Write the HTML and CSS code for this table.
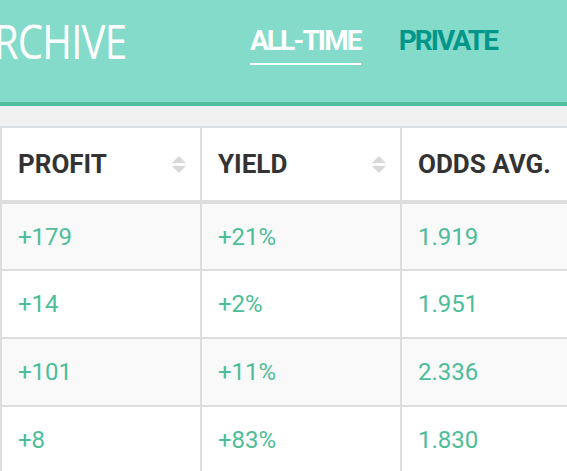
FILE: index.html
```html
<!DOCTYPE html>
<html>
<head>
    <link rel="stylesheet" href="styles.css">
</head>
<body>
    <div id="top-bar">
        <h1 class="title">ARCHIVE</h1>
        <nav class="tabs">
            <a class="tab active">ALL-TIME</a>
            <a class="tab">PRIVATE</a>
        </nav>
    </div>

    <div id="table-wrap">
        <table class="stats">
            <thead>
                <tr>
                    <th><div class="th-inner">PROFIT <span class="sort"></span></div></th>
                    <th><div class="th-inner">YIELD <span class="sort"></span></div></th>
                    <th><div class="th-inner">ODDS AVG. <span class="sort"></span></div></th>
                </tr>
            </thead>
            <tbody>
                <tr><td>+179</td><td>+21%</td><td>1.919</td></tr>
                <tr><td>+14</td><td>+2%</td><td>1.951</td></tr>
                <tr><td>+101</td><td>+11%</td><td>2.336</td></tr>
                <tr><td>+8</td><td>+83%</td><td>1.830</td></tr>
            </tbody>
        </table>
    </div>
</body>
</html>
```

FILE: styles.css
```css
html, body {
    margin: 0;
    padding: 0;
    overflow: hidden;
}

body {
    background: #f1f1f1;
    font-family: Roboto, "Liberation Sans", sans-serif;
    width: 567px;
    height: 471px;
}

#top-bar {
    height: 102px;
    background: #84dbca;
    border-bottom: 4px solid #52be9e;
    display: flex;
    align-items: flex-start;
}

.title {
    margin: 0 0 0 -31px;
    padding-top: 13px;
    font-family: "Open Sans", sans-serif;
    font-weight: 400;
    font-size: 48px;
    line-height: 56px;
    color: #fff;
    letter-spacing: -1px;
    transform: scaleX(0.84);
    transform-origin: left center;
}

.tabs {
    margin-left: auto;
    margin-right: 70px;
    display: flex;
    gap: 38px;
    padding-top: 24px;
}

.tab {
    font-weight: bold;
    font-size: 28px;
    line-height: 34px;
    color: #00978a;
    letter-spacing: -1.9px;
    padding-bottom: 5px;
    border-bottom: 2px solid transparent;
}

.tab.active {
    color: #fff;
    border-bottom-color: #fff;
}

#table-wrap {
    padding-top: 20px;
}

.stats {
    border-collapse: collapse;
    table-layout: fixed;
    background: #fff;
    width: 602px;
    border-top: 2px solid #dde0e3;
}

.stats th,
.stats td {
    width: 200px;
    box-sizing: border-box;
    border: 2px solid #dddddd;
    border-top: none;
    text-align: left;
    padding: 0 14px 0 16px;
}

.stats th {
    height: 75px;
    border-bottom-width: 4px;
    font-size: 26px;
    font-weight: bold;
    color: #333;
}

.th-inner {
    display: flex;
    align-items: center;
    justify-content: space-between;
}

.sort {
    display: inline-flex;
    flex-direction: column;
    gap: 3px;
}

.sort::before,
.sort::after {
    content: "";
    width: 0;
    height: 0;
    border-left: 7px solid transparent;
    border-right: 7px solid transparent;
}

.sort::before {
    border-bottom: 7px solid #d8d8d8;
}

.sort::after {
    border-top: 7px solid #d8d8d8;
}

.stats td {
    height: 68px;
    font-size: 24px;
    color: #4dbd99;
}

.stats tbody tr:nth-child(odd) td {
    background: #f9f9f9;
}
```
